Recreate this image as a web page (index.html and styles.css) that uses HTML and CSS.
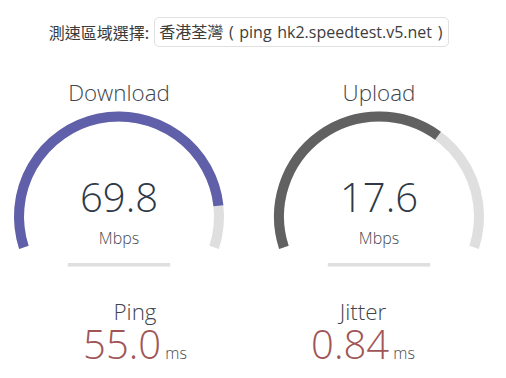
FILE: index.html
```html
<!DOCTYPE html>
<html lang="zh-Hant">
<head>
<meta charset="utf-8">
<title>Speedtest</title>
<link rel="stylesheet" href="styles.css">
</head>
<body>
<div class="page">
  <div class="server">
    <span class="server-label">測速區域選擇:</span>
    <div class="server-select">香港荃灣 ( ping hk2.speedtest.v5.net )</div>
  </div>

  <div class="gauges">
    <div class="gauge">
      <svg class="meter" width="256" height="200" viewBox="0 0 256 200">
        <path d="M32.894 171.402 A100 100 0 1 1 223.106 171.402" fill="none" stroke="#dfdfdf" stroke-width="10"/>
        <path d="M32.894 171.402 A100 100 0 1 1 227.43 129.82" fill="none" stroke="#6060aa" stroke-width="10"/>
        <rect x="76.8" y="187" width="102.4" height="3.6" fill="#dfdfdf"/>
      </svg>
      <div class="gname">Download</div>
      <div class="gval">69.8</div>
      <div class="gunit">Mbps</div>
    </div>
    <div class="gauge">
      <svg class="meter" width="256" height="200" viewBox="0 0 256 200">
        <path d="M32.894 171.402 A100 100 0 1 1 223.106 171.402" fill="none" stroke="#dfdfdf" stroke-width="10"/>
        <path d="M32.894 171.402 A100 100 0 0 1 186.99 59.75" fill="none" stroke="#616161" stroke-width="10"/>
        <rect x="76.8" y="187" width="102.4" height="3.6" fill="#dfdfdf"/>
      </svg>
      <div class="gname">Upload</div>
      <div class="gval">17.6</div>
      <div class="gunit">Mbps</div>
    </div>
  </div>

  <div class="pings">
    <div class="parea">
      <div class="pname">Ping</div>
      <div class="prow"><span class="pval">55.0</span> <span class="punit">ms</span></div>
    </div>
    <div class="parea">
      <div class="pname">Jitter</div>
      <div class="prow"><span class="pval">0.84</span> <span class="punit">ms</span></div>
    </div>
  </div>
</div>
</body>
</html>
```

FILE: styles.css
```css
html, body {
  margin: 0;
  padding: 0;
  background: #ffffff;
}

body {
  font-family: "Open Sans", "Noto Sans CJK TC", sans-serif;
  font-size: 16px;
  color: #333333;
}

.page {
  width: 498px;
  overflow: visible;
}

/* server selector row */
.server {
  display: flex;
  justify-content: center;
  align-items: center;
  gap: 5px;
  margin-top: 17px;
  height: 30px;
}

.server-label {
  font-family: "Noto Sans CJK TC", "Open Sans", sans-serif;
  font-size: 16px;
  line-height: 30px;
  color: #3a3a3a;
}

.server-label,
.server-select {
  white-space: nowrap;
}

.server-select {
  box-sizing: border-box;
  height: 30px;
  width: 295px;
  border: 1px solid #e0e0e0;
  border-radius: 5px;
  padding: 0 0 0 4px;
  font-family: "Open Sans", "Noto Sans CJK TC", sans-serif;
  font-size: 16px;
  word-spacing: 1.5px;
  line-height: 28px;
  color: #3d3d3d;
}

/* gauges */
.gauges {
  display: flex;
  justify-content: center;
  gap: 4px;
  margin-top: 29px;
}

.gauge {
  flex: none;
  width: 256px;
  height: 200px;
  display: grid;
  grid-template-columns: 256px;
  grid-template-rows: 200px;
}

.gauge > * {
  grid-area: 1 / 1;
  align-self: start;
  text-align: center;
}

.meter {
  display: block;
}

.gname {
  font-size: 22.4px;
  font-weight: 300;
  line-height: 30px;
  margin-top: 2px;
  color: #3f454b;
}

.gval {
  font-size: 40px;
  font-weight: 300;
  line-height: 40px;
  margin-top: 100.5px;
  color: #2e3846;
}

.gunit {
  font-size: 16px;
  font-weight: 300;
  line-height: 20px;
  margin-top: 152.3px;
  color: #45494e;
}

/* ping / jitter */
.pings {
  display: flex;
  justify-content: center;
  gap: 4px;
  margin-top: 25px;
}

.parea {
  flex: none;
  width: 224px;
  text-align: center;
}

.pname {
  font-size: 22.4px;
  font-weight: 300;
  line-height: 22px;
  color: #3f454b;
}

.prow {
  font-size: 16px;
  line-height: 40px;
  margin-top: 1px;
}

.pval {
  display: inline-block;
  font-size: 40px;
  font-weight: 300;
  line-height: 40px;
  color: #a05656;
}

.punit {
  font-size: 16px;
  font-weight: 300;
  color: #45494e;
}
```
